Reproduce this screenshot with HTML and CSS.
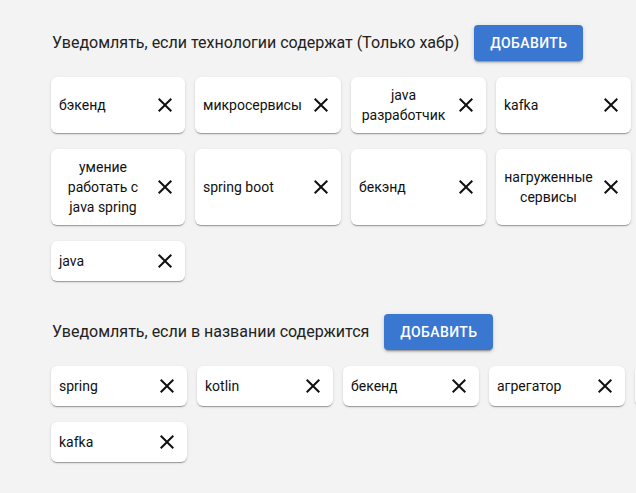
FILE: index.html
```html
<!DOCTYPE html>
<html lang="ru">
<head>
<meta charset="utf-8">
<title>Уведомления</title>
<link rel="stylesheet" href="styles.css">
</head>
<body>
<main class="page">
  <section class="group">
    <div class="group-head">
      <span class="group-title">Уведомлять, если технологии содержат (Только хабр)</span>
      <button class="add-btn" type="button">Добавить</button>
    </div>
    <div class="chips chips-tech">
      <div class="chip"><span class="chip-text">бэкенд</span><svg class="chip-close" viewBox="0 0 24 24"><path d="M19 6.41L17.59 5 12 10.59 6.41 5 5 6.41 10.59 12 5 17.59 6.41 19 12 13.41 17.59 19 19 17.59 13.41 12z"/></svg></div>
      <div class="chip"><span class="chip-text">микросервисы</span><svg class="chip-close" viewBox="0 0 24 24"><path d="M19 6.41L17.59 5 12 10.59 6.41 5 5 6.41 10.59 12 5 17.59 6.41 19 12 13.41 17.59 19 19 17.59 13.41 12z"/></svg></div>
      <div class="chip"><span class="chip-text">java разработчик</span><svg class="chip-close" viewBox="0 0 24 24"><path d="M19 6.41L17.59 5 12 10.59 6.41 5 5 6.41 10.59 12 5 17.59 6.41 19 12 13.41 17.59 19 19 17.59 13.41 12z"/></svg></div>
      <div class="chip"><span class="chip-text">kafka</span><svg class="chip-close" viewBox="0 0 24 24"><path d="M19 6.41L17.59 5 12 10.59 6.41 5 5 6.41 10.59 12 5 17.59 6.41 19 12 13.41 17.59 19 19 17.59 13.41 12z"/></svg></div>
      <div class="chip"><span class="chip-text">умение работать с java spring</span><svg class="chip-close" viewBox="0 0 24 24"><path d="M19 6.41L17.59 5 12 10.59 6.41 5 5 6.41 10.59 12 5 17.59 6.41 19 12 13.41 17.59 19 19 17.59 13.41 12z"/></svg></div>
      <div class="chip"><span class="chip-text">spring boot</span><svg class="chip-close" viewBox="0 0 24 24"><path d="M19 6.41L17.59 5 12 10.59 6.41 5 5 6.41 10.59 12 5 17.59 6.41 19 12 13.41 17.59 19 19 17.59 13.41 12z"/></svg></div>
      <div class="chip"><span class="chip-text">бекэнд</span><svg class="chip-close" viewBox="0 0 24 24"><path d="M19 6.41L17.59 5 12 10.59 6.41 5 5 6.41 10.59 12 5 17.59 6.41 19 12 13.41 17.59 19 19 17.59 13.41 12z"/></svg></div>
      <div class="chip"><span class="chip-text">нагруженные сервисы</span><svg class="chip-close" viewBox="0 0 24 24"><path d="M19 6.41L17.59 5 12 10.59 6.41 5 5 6.41 10.59 12 5 17.59 6.41 19 12 13.41 17.59 19 19 17.59 13.41 12z"/></svg></div>
      <div class="chip"><span class="chip-text">java</span><svg class="chip-close" viewBox="0 0 24 24"><path d="M19 6.41L17.59 5 12 10.59 6.41 5 5 6.41 10.59 12 5 17.59 6.41 19 12 13.41 17.59 19 19 17.59 13.41 12z"/></svg></div>
    </div>
  </section>
  <section class="group">
    <div class="group-head">
      <span class="group-title">Уведомлять, если в названии содержится</span>
      <button class="add-btn" type="button">Добавить</button>
    </div>
    <div class="chips chips-title">
      <div class="chip"><span class="chip-text">spring</span><svg class="chip-close" viewBox="0 0 24 24"><path d="M19 6.41L17.59 5 12 10.59 6.41 5 5 6.41 10.59 12 5 17.59 6.41 19 12 13.41 17.59 19 19 17.59 13.41 12z"/></svg></div>
      <div class="chip"><span class="chip-text">kotlin</span><svg class="chip-close" viewBox="0 0 24 24"><path d="M19 6.41L17.59 5 12 10.59 6.41 5 5 6.41 10.59 12 5 17.59 6.41 19 12 13.41 17.59 19 19 17.59 13.41 12z"/></svg></div>
      <div class="chip"><span class="chip-text">бекенд</span><svg class="chip-close" viewBox="0 0 24 24"><path d="M19 6.41L17.59 5 12 10.59 6.41 5 5 6.41 10.59 12 5 17.59 6.41 19 12 13.41 17.59 19 19 17.59 13.41 12z"/></svg></div>
      <div class="chip"><span class="chip-text">агрегатор</span><svg class="chip-close" viewBox="0 0 24 24"><path d="M19 6.41L17.59 5 12 10.59 6.41 5 5 6.41 10.59 12 5 17.59 6.41 19 12 13.41 17.59 19 19 17.59 13.41 12z"/></svg></div>
      <div class="chip chip-offscreen"><svg class="chip-close" viewBox="0 0 24 24"><path d="M19 6.41L17.59 5 12 10.59 6.41 5 5 6.41 10.59 12 5 17.59 6.41 19 12 13.41 17.59 19 19 17.59 13.41 12z"/></svg></div>
      <div class="chip"><span class="chip-text">kafka</span><svg class="chip-close" viewBox="0 0 24 24"><path d="M19 6.41L17.59 5 12 10.59 6.41 5 5 6.41 10.59 12 5 17.59 6.41 19 12 13.41 17.59 19 19 17.59 13.41 12z"/></svg></div>
    </div>
  </section>
</main>
</body>
</html>
```

FILE: styles.css
```css
html, body {
  margin: 0;
  padding: 0;
  overflow: hidden;
  background: #f3f3f3;
  font-family: Roboto, "Noto Sans", "Liberation Sans", sans-serif;
  color: rgba(0, 0, 0, 0.87);
}

.page {
  padding: 25px 0 0 51px;
  width: 900px;
}

.group {
  margin-bottom: 33px;
}

.group-head {
  display: flex;
  align-items: center;
  gap: 15px;
  margin-bottom: 16px;
}

.group-title {
  font-size: 16px;
  line-height: 24px;
  padding-left: 1px;
  color: #222;
}

.add-btn {
  height: 36px;
  padding: 0 16px;
  border: 0;
  border-radius: 4px;
  background: #3a77d0;
  color: #fff;
  font-family: Roboto, "Liberation Sans", sans-serif;
  font-size: 14px;
  font-weight: 500;
  letter-spacing: 0.4px;
  text-transform: uppercase;
  box-shadow: 0 3px 1px -2px rgba(0,0,0,.2), 0 2px 2px 0 rgba(0,0,0,.14), 0 1px 5px 0 rgba(0,0,0,.12);
}

.chips {
  display: grid;
  column-gap: 10px;
  row-gap: 16px;
}

.chips-tech {
  grid-template-columns: 134px 146px 135px 135px;
}

.chips-title {
  grid-template-columns: repeat(5, 136px);
}

.chip {
  display: flex;
  align-items: center;
  justify-content: space-between;
  gap: 6px;
  padding: 8px;
  background: #fff;
  border-radius: 6px;
  box-shadow: 0 2px 1px -1px rgba(0,0,0,.2), 0 1px 1px 0 rgba(0,0,0,.14), 0 1px 3px 0 rgba(0,0,0,.12);
}

.chip-offscreen {
  justify-content: flex-end;
}

.chip-text {
  font-size: 14px;
  line-height: 20px;
  text-align: center;
  color: #111;
}

.chip-close {
  flex: none;
  width: 24px;
  height: 24px;
  fill: #111;
}
```
